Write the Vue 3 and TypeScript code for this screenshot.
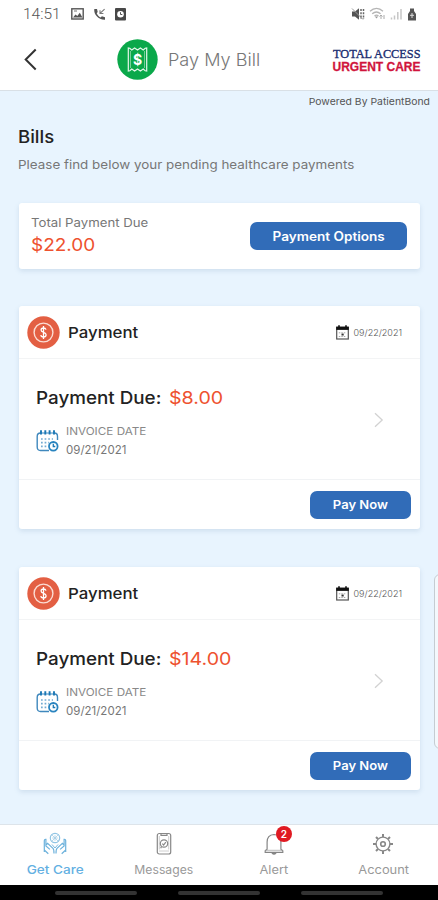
<script setup lang="ts">
interface Bill {
  id: number
  amount: string
  invoiceDate: string
  postedDate: string
}

const bills: Bill[] = [
  { id: 1, amount: '$8.00', invoiceDate: '09/21/2021', postedDate: '09/22/2021' },
  { id: 2, amount: '$14.00', invoiceDate: '09/21/2021', postedDate: '09/22/2021' },
]
</script>

<template>
  <div class="screen">
    <div class="status">
      <span class="clock">14:51</span>
      <svg class="st-pic" width="13" height="12" viewBox="0 0 13 12">
        <rect x=".8" y=".8" width="11.4" height="10.2" fill="none" stroke="#555" stroke-width="1.4" />
        <path d="M2 9.5 4.5 6.4 6.3 8 8.8 4.8 11.4 9.5Z" fill="#555" />
        <path d="M3 3h3" stroke="#777" />
      </svg>
      <svg class="st-call" width="13" height="13" viewBox="0 0 13 13">
        <path d="M1.300 1C.5 6.500 5.700 12 12 11.700V9.200L8.900 8.300 7.600 9.400C5.800 8.500 4.500 7.100 3.700 5.200L4.700 4 4 1Z" fill="#555" />
        <path d="M11.600 1.200 7.300 5.200M7 2.200v3.300h3.400" fill="none" stroke="#777" stroke-width="1.100" />
      </svg>
      <svg width="11" height="13" viewBox="0 0 11 13">
        <rect width="11" height="12.600" rx="1" fill="#484848" />
        <circle cx="5.500" cy="6.300" r="3.300" fill="#fff" />
        <path d="M5.500 4.200v2.300h1.800" fill="none" stroke="#555" />
      </svg>
      <div class="status-right">
        <svg width="14" height="14" viewBox="0 0 14 14">
          <path d="M1 4.500h3l4-3.300v11.600L4 9.500H1Z" fill="#555" />
          <path d="M1 1.500 12 12.500" stroke="#999" stroke-width="1" />
          <path d="M10 2v10M12.500 2v10" stroke="#666" stroke-width="1.500" stroke-dasharray="2 1.200" />
        </svg>
        <svg width="17" height="14" viewBox="0 0 17 14">
          <path d="M1 4.200C5 .6 10 .6 14 4.200M3.200 6.700c2.600-2.200 5.700-2.200 8.400 0M5.500 9c1.200-1 2.800-1 4 0" fill="none" stroke="#b5b5b5" stroke-width="1.300" />
          <path d="M7.500 11.500 5.800 9.400h3.400Z" fill="#999" />
          <path d="M12 12V8m-1.500 1.500L12 8l1.500 1.500M15 8v4" fill="none" stroke="#aaa" />
        </svg>
        <svg width="13" height="14" viewBox="0 0 13 14">
          <path d="M1.500 12.500v-2M4.500 12.500V8.500M7.800 12.500V5M11 12.500V2" stroke="#c6c6c6" stroke-width="1.500" />
        </svg>
        <svg width="10" height="13" viewBox="0 0 10 13">
          <path d="M3 .6h4V3L9 6v6.500H1V6l2-3Z" fill="#555" />
          <path d="M3 7.300h4M5 5v5" stroke="#ddd" />
        </svg>
      </div>
    </div>

    <header class="header">
      <svg class="back" width="14" height="24" viewBox="0 0 14 24">
        <path d="M12.700 2.500 2.700 12.500l10 10" fill="none" stroke="#333" stroke-width="2" />
      </svg>
      <svg class="bill-icon" width="41" height="41" viewBox="0 0 41 41">
        <circle cx="20.500" cy="20.500" r="20.200" fill="#0aa84a" />
        <path d="M11.300 10.200V9l1.500.2 2 1.800 2.800-2 2.900 2 2.900-2 2.800 2 2-1.800 1.500-.2V32l-1.500-.2-2-1.800-2.800 2-2.900-2-2.900 2-2.800-2-2 1.800-1.500.2Z" fill="none" stroke="#e5f6eb" stroke-width="1.200" />
        <path d="M13.500 12v17M27.500 12v17" stroke="#7fd29e" stroke-width=".9" />
        <text x="20.500" y="25.500" text-anchor="middle" class="bill-dollar">$</text>
      </svg>
      <h1 class="title wide">Pay My Bill</h1>
      <svg class="brand" width="94" height="44" viewBox="0 0 94 44">
        <text x="3" y="20.500" textLength="87.500" lengthAdjust="spacingAndGlyphs" class="brand-top">TOTAL ACCESS</text>
        <text x="2.500" y="34" textLength="88" lengthAdjust="spacingAndGlyphs" class="brand-bottom">URGENT CARE</text>
      </svg>
    </header>

    <main class="main">
      <div class="powered wide">Powered By PatientBond</div>
      <h2 class="heading wide">Bills</h2>
      <p class="intro wide">Please find below your pending healthcare payments</p>

      <section class="card total">
        <div>
          <div class="total-label wide">Total Payment Due</div>
          <div class="total-value wide">$22.00</div>
        </div>
        <button class="btn options"><span class="wide">Payment Options</span></button>
      </section>

      <section v-for="bill in bills" :key="bill.id" class="card bill">
        <div class="bill-head">
          <svg width="33" height="33" viewBox="0 0 33 33">
            <circle cx="16.500" cy="16.500" r="16.200" fill="#e35f43" />
            <circle cx="16.500" cy="16.500" r="9.400" fill="none" stroke="#fbdcd3" stroke-width="1.400" />
            <path d="M19 13.600c-.3-1.100-1.200-1.600-2.500-1.600-1.400 0-2.400.7-2.400 2 0 3 5 1.800 5 4.800 0 1.400-1.100 2.200-2.600 2.200s-2.500-.7-2.700-1.900M16.500 10v13" fill="none" stroke="#fff" stroke-width="1.300" />
          </svg>
          <span class="bill-name wide">Payment</span>
          <svg class="cal" width="13" height="15" viewBox="0 0 13 15">
            <rect x=".7" y="2.300" width="11.600" height="11.700" fill="#fff" stroke="#555" stroke-width="1.200" />
            <path d="M.2 1.700h12.600v3.200H.2Z" fill="#111" />
            <path d="M3 .2v2M10 .2v2" stroke="#111" stroke-width="1.600" />
            <path d="M2.800 7.800h7.500M2.800 11.500h7.500" stroke="#aaa" stroke-width="1" stroke-dasharray="1.500 1" />
            <path d="M5.500 8.600h2.200v1.900H5.500Z" fill="#333" />
          </svg>
          <span class="posted">{{ bill.postedDate }}</span>
        </div>
        <div class="bill-body">
          <div class="bill-info">
            <div class="due">
              <span class="due-label wide">Payment Due:</span>
              <span class="due-value wide">{{ bill.amount }}</span>
            </div>
            <div class="invoice">
              <svg width="23" height="24" viewBox="0 0 23 24">
                <path d="M13 21.500H4.500Q1.200 21.500 1.200 18V7.500Q1.200 4 4.500 4M18.500 4q3 0 3 3.500V11" fill="none" stroke="#3f88bd" stroke-width="1.400" />
                <path d="M4.500 4h14" stroke="#5b9ccb" stroke-width="1.200" />
                <path d="M5 1.300v4.200M9.300 1.300v4.200M13.600 1.300v4.200M18 1.300v4.200" stroke="#1b78b5" stroke-width="1.900" />
                <path d="M5 10h12M5 13.700h8M5 17.400h7" stroke="#74acd2" stroke-width="1.700" stroke-dasharray="1.700 1.900" />
                <circle cx="17.300" cy="17.300" r="4.300" fill="#fff" stroke="#2984bf" stroke-width="1.800" />
                <path d="M17.300 14.800v2.700h2" fill="none" stroke="#1b78b5" stroke-width="1.300" />
              </svg>
              <div>
                <div class="inv-label wide">INVOICE DATE</div>
                <div class="inv-date">{{ bill.invoiceDate }}</div>
              </div>
            </div>
          </div>
          <svg class="chevron" width="10" height="16" viewBox="0 0 10 16">
            <path d="M1 1.200 8.200 8 1 14.800" fill="none" stroke="#d2d2d2" stroke-width="1.300" />
          </svg>
        </div>
        <div class="bill-foot">
          <button class="btn pay"><span class="wide">Pay Now</span></button>
        </div>
      </section>
      <div class="edge-handle"></div>
    </main>

    <nav class="nav">
      <a class="tab active">
        <svg width="24" height="24" viewBox="0 0 24 24" fill="none" stroke="#6db2dc" stroke-width="1.200">
          <circle cx="12" cy="6" r="4.700" stroke="#91c5e4" />
          <path d="M12 3.200v5.600M9.200 6h5.600M8.700 2.700l6.600 6.600M15.300 2.700 8.700 9.300" stroke="#a4cee6" stroke-width=".8" />
          <path d="M1.300 20V9q0-2 1.600-1.700V14l4 3.400M2.900 13l1.700-1.600 5.400 5q1 1 1 5.200M1.300 18l4 3.800" />
          <path d="M22.700 20V9q0-2-1.600-1.700V14l-4 3.400M21.100 13l-1.700-1.600-5.400 5q-1 1-1 5.200M22.700 18l-4 3.800" />
          <path d="M9 12.500 12 16l3-3.500" stroke-width=".9" />
        </svg>
        <span class="tab-label t-care wide">Get Care</span>
      </a>
      <a class="tab">
        <svg width="24" height="24" viewBox="0 0 24 24" fill="none" stroke="#888" stroke-width="1.200">
          <rect x="5.300" y="1.500" width="13.400" height="20.500" rx="2" />
          <path d="M9 1.500v1.800h6V1.500" />
          <path d="M7.300 4v13.500M16.700 4v13.500M7 19h10" stroke="#c2c2c2" stroke-width=".8" />
          <circle cx="12" cy="11.500" r="3.700" />
          <path d="m10.300 11.600 1.300 1.400 2.200-2.800M9.500 14.500l-.8 1.800" />
        </svg>
        <span class="tab-label t-msg wide">Messages</span>
      </a>
      <a class="tab">
        <span class="bell">
          <svg width="24" height="24" viewBox="0 0 24 24" fill="none" stroke="#858585" stroke-width="1.200">
            <path d="M3.200 20.300v-1.600l1.900-1.600V10q0-7 6.900-7.500Q18.900 3 18.900 10v7.100l1.900 1.600v1.600Z" />
            <path d="M3.500 18.300h17" stroke="#aaa" stroke-width=".8" />
            <path d="M10 20.800q2 2.600 4 0Z" fill="#777" />
          </svg>
          <span class="badge">2</span>
        </span>
        <span class="tab-label t-alert wide">Alert</span>
      </a>
      <a class="tab">
        <svg width="24" height="24" viewBox="0 0 24 24" fill="none" stroke="#888" stroke-width="1.400">
          <circle cx="12" cy="12" r="6.900" />
          <circle cx="12" cy="12" r="2.300" stroke-width="1.600" />
          <path d="M12 2v3M12 19v3M2 12h3M19 12h3M5 5l2 2M17 17l2 2M5 19l2-2M17 7l2-2" stroke-width="2" />
        </svg>
        <span class="tab-label t-acc wide">Account</span>
      </a>
    </nav>
    <div class="system-bar"><i></i><i></i><i></i></div>
  </div>
</template>

<style>
body {
  margin: 0;
}
</style>

<style scoped>
.screen {
  width: 438px;
  height: 900px;
  display: flex;
  flex-direction: column;
  overflow: hidden;
  background: #fff;
  font-family: Inter, 'Open Sans', sans-serif;
  color: #222;
}
h1, h2, p {
  margin: 0;
}
svg {
  display: block;
  flex: none;
}
/* Extends the letterforms horizontally by a per-label ratio */
.wide {
  transform: scaleX(var(--stretch, 1.1));
  transform-origin: left center;
  white-space: nowrap;
}
.status {
  height: 28px;
  box-sizing: border-box;
  padding: 0 21px 0 23px;
  display: flex;
  align-items: center;
  gap: 9px;
}
.clock {
  width: 39px;
  font: 300 15.500px Roboto, sans-serif;
  color: #555;
}
.status-right {
  margin-left: auto;
  display: flex;
  align-items: center;
  gap: 4px;
}
.header {
  height: 63px;
  box-sizing: border-box;
  border-bottom: 1px solid #d9e0e6;
  padding: 0 14px 0 23px;
  display: flex;
  align-items: center;
}
.bill-icon {
  margin-left: 80px;
}
.bill-dollar {
  font: 700 14px Inter, sans-serif;
  fill: #fff;
}
.title {
  --stretch: 1.065;
  margin-left: 10px;
  padding-top: 2px;
  font-size: 17px;
  line-height: 24px;
  font-weight: 300;
  color: #777;
}
.brand {
  margin-left: auto;
}
.brand-top {
  font: 400 13.500px 'Liberation Serif', serif;
  fill: #1b2d70;
  stroke: #1b2d70;
  stroke-width: .35px;
}
.brand-bottom {
  font: 700 13.500px 'Liberation Sans', sans-serif;
  fill: #d0143c;
  stroke: #d0143c;
  stroke-width: .3px;
}
.main {
  position: relative;
  height: 733px;
  box-sizing: border-box;
  padding: 0 18px 0 19px;
  background: #e8f4fe;
}
.powered {
  --stretch: 1.095;
  transform-origin: right center;
  margin-right: -10px;
  padding-top: 4px;
  text-align: right;
  font-size: 9.500px;
  line-height: 14px;
  color: #555;
}
.heading {
  --stretch: 1.09;
  margin: 16px 0 0 -1px;
  font-size: 17px;
  line-height: 24px;
  font-weight: 500;
}
.intro {
  --stretch: 1.118;
  margin: 7px 0 0 -1px;
  font-size: 12px;
  line-height: 18px;
  color: #777;
}
.card {
  background: #fff;
  border-radius: 3px;
  box-shadow: 0 2px 5px rgba(90, 130, 165, .18);
}
.total {
  height: 66px;
  margin-top: 29px;
  box-sizing: border-box;
  padding: 0 13px 0 12px;
  display: flex;
  align-items: center;
  justify-content: space-between;
}
.total-label {
  --stretch: 1.147;
  font-size: 11.500px;
  line-height: 16px;
  color: #777;
  padding-bottom: 2px;
}
.total-value {
  --stretch: 1.085;
  font-size: 17.500px;
  line-height: 24px;
  color: #ee522f;
}
.btn {
  display: block;
  border: 0;
  border-radius: 7px;
  padding: 0;
  height: 28px;
  background: #316cb8;
  color: #fff;
  font: 600 12px Inter, sans-serif;
}
.btn .wide {
  --stretch: 1.085;
  display: inline-block;
  transform-origin: center;
}
.options {
  width: 157px;
  font-size: 12.500px;
}
.pay {
  width: 101px;
}
.bill {
  height: 223px;
  margin-top: 37px;
  display: flex;
  flex-direction: column;
}
.bill + .bill {
  margin-top: 38px;
}
.bill-head {
  height: 53px;
  box-sizing: border-box;
  padding: 0 18px 0 8px;
  border-bottom: 1px solid #f3f4f5;
  display: flex;
  align-items: center;
}
.bill-name {
  --stretch: 1.12;
  margin-left: 8px;
  font-size: 15px;
  font-weight: 500;
}
.cal {
  margin-left: auto;
}
.posted {
  margin-left: 5px;
  font-size: 9px;
  font-weight: 300;
  color: #555;
}
.bill-body {
  height: 121px;
  box-sizing: border-box;
  padding: 27px 36px 0 17px;
  border-bottom: 1px solid #f1f3f5;
  display: flex;
  justify-content: space-between;
}
.due {
  display: flex;
  gap: 16px;
  font-size: 17.500px;
  line-height: 24px;
}
.due-label {
  --stretch: 1.075;
  font-weight: 500;
}
.due-value {
  --stretch: 1.12;
  color: #ee522f;
}
.invoice {
  margin-top: 13px;
  display: flex;
  gap: 7px;
  align-items: center;
}
.inv-label {
  --stretch: 1.115;
  font-size: 10.500px;
  line-height: 18px;
  color: #888;
}
.inv-date {
  font-size: 11.500px;
  line-height: 18px;
  color: #777;
}
.chevron {
  margin-top: 26px;
}
.bill-foot {
  flex: 1;
  display: flex;
  justify-content: flex-end;
  align-items: center;
  padding-right: 9px;
}
.edge-handle {
  position: absolute;
  right: -3px;
  top: 483px;
  width: 5px;
  height: 173px;
  border: 1px solid #c5ccd2;
  border-radius: 6px 0 0 6px;
  background: #f3f8fc;
}
.nav {
  height: 61px;
  box-sizing: border-box;
  border-top: 1px solid #dde4ea;
  display: grid;
  grid-template-columns: repeat(4, 1fr);
}
.tab {
  display: flex;
  flex-direction: column;
  align-items: center;
  padding-top: 7px;
  color: #999;
}
.tab-label {
  --stretch: 1.12;
  transform-origin: center;
  margin-top: 6px;
  font-size: 11.500px;
  line-height: 16px;
}
.active {
  color: #63b0e2;
}
.t-care {
  --stretch: 1.18;
  font-weight: 500;
}
.t-msg {
  --stretch: 1.06;
}
.bell {
  position: relative;
}
.badge {
  position: absolute;
  left: 14px;
  top: -6px;
  width: 16px;
  height: 16px;
  border-radius: 50%;
  background: #e01a22;
  color: #fff;
  font-size: 10px;
  font-weight: 600;
  line-height: 16px;
  text-align: center;
}
.system-bar {
  height: 15px;
  background: #000;
  display: flex;
  justify-content: center;
  align-items: center;
  gap: 41px;
}
.system-bar i {
  width: 82px;
  height: 4px;
  border-radius: 2px;
  background: #333;
}
</style>
